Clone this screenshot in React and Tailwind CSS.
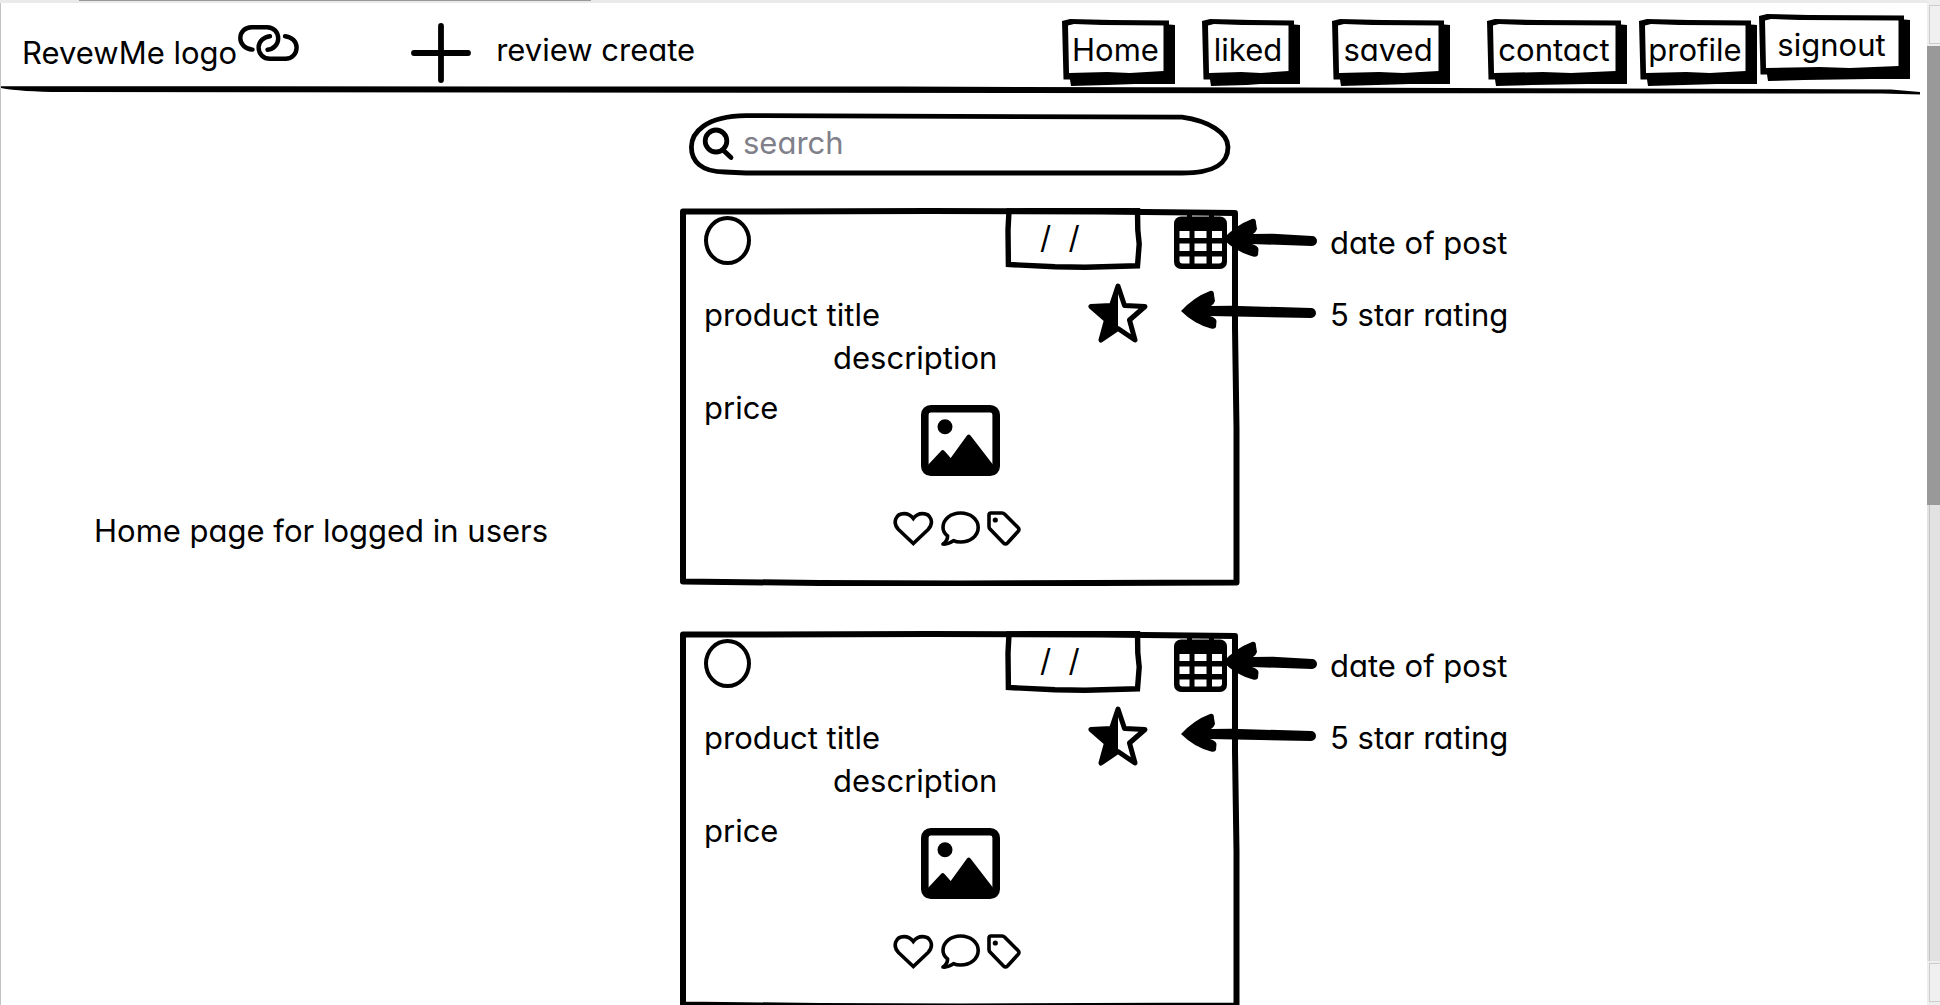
import React from "react";

const NAV = [
  { label: "Home", width: 113, box: "w-[113px] mr-[27px] mt-4" },
  { label: "liked", width: 98, box: "w-[98px] mr-8 mt-4" },
  { label: "saved", width: 118, box: "w-[118px] mr-[37px] mt-4" },
  { label: "contact", width: 140, box: "w-[140px] mr-3 mt-4" },
  { label: "profile", width: 118, box: "w-[118px] mr-0.5 mt-4" },
  { label: "signout", width: 151, box: "w-[151px] mt-[11px]" },
];

function NavButton({ label, width: w, box }) {
  return (
    <button
      type="button"
      className={"relative flex h-[67px] shrink-0 justify-center pt-[11px] pr-1.5 leading-10 " + box}
    >
      <svg
        className="absolute inset-0 h-full w-full"
        viewBox={`0 0 ${w} 67`}
        aria-hidden="true"
      >
        <path
          d={`M0 2 L8 0 L50 1 L${w - 6} 1.5 L${w - 6} 5.5 L${w} 6 L${w} 65 L${w - 40} 65 L45 66 L9 67 L8 60.5 L1.5 60.5 Z`}
          fill="#000"
        />
        <path
          d={`M6 6.5 L12 5 L40 6 L${w - 11.5} 6.5 L${w - 11.5} 52 L${w * 0.6} 54 L${w * 0.4} 53 L7 54 Z`}
          fill="#fff"
        />
      </svg>
      <span className="relative">{label}</span>
    </button>
  );
}

function LinkIcon() {
  return (
    <svg className="ml-px mt-[22px] h-9 w-[61px] shrink-0" viewBox="0 0 61 36" fill="none" stroke="#000" strokeWidth="4.4" strokeLinecap="round" aria-hidden="true">
      <path d="M14.5 24.6 C7 24 2.3 19 2.3 13 C2.3 7 7 2.2 13.5 2.2 H29 C35.5 2.2 40.2 7 40.2 13.5 C40.2 19.5 35.5 24 29.5 24.8" />
      <path d="M32 11.2 C25.5 12 20.6 16.5 20.6 22.5 C20.6 29 25.5 33.8 32 33.8 H47.5 C54 33.8 58.6 29 58.6 22.5 C58.6 16.5 54 12 47 11.2" />
    </svg>
  );
}

function PlusIcon() {
  return (
    <svg className="mt-5 h-[60px] w-[60px]" viewBox="0 0 60 60" stroke="#000" strokeWidth="5.8" strokeLinecap="round" aria-hidden="true">
      <path d="M3 30 H57 M30 3 V57" />
    </svg>
  );
}

function CalendarIcon() {
  return (
    <svg className="ml-8 h-[61px] w-[53px] shrink-0" viewBox="0 0 53 61" aria-hidden="true">
      <rect x="0" y="8.5" width="53" height="52.5" rx="7" />
      <rect x="13" y="2" width="5" height="10" rx="1" />
      <rect x="35" y="2" width="5" height="10" rx="1" />
      <g fill="#fff">
        <rect x="5.5" y="23" width="10" height="7" />
        <rect x="20.5" y="23" width="12" height="7" />
        <rect x="38" y="23" width="10" height="7" />
        <rect x="5.5" y="35.5" width="10" height="7.5" />
        <rect x="20.5" y="35.5" width="12" height="7.5" />
        <rect x="38" y="35.5" width="10" height="7.5" />
        <path d="M5.5 48.5 h10 v7 h-7 q-3 0 -3 -3 Z" />
        <rect x="20.5" y="48.5" width="12" height="7" />
        <path d="M38 48.5 h10 v4 q0 3 -3 3 h-7 Z" />
      </g>
    </svg>
  );
}

function HalfStarIcon() {
  return (
    <svg className="h-[60px] w-[60px] shrink-0" viewBox="0 0 60 60" stroke="#000" strokeWidth="5" strokeLinejoin="round" role="img" aria-label="rating">
      <path d="M30 3 L36.5 22.5 L57 23.5 L41.5 37 L47 57 L30 45.5 L13 57 L18.5 37 L3 23.5 L23.5 22.5 Z" fill="none" />
      <path d="M30 3 V45.5 L13 57 L18.5 37 L3 23.5 L23.5 22.5 Z" fill="#000" stroke="none" />
    </svg>
  );
}

function PictureIcon() {
  return (
    <svg className="mt-[17px] h-[71px] w-[79px]" viewBox="0 0 79 71" role="img" aria-label="product picture">
      <rect x="3.8" y="3.8" width="71.4" height="63.4" rx="6" fill="none" stroke="#000" strokeWidth="7.6" />
      <circle cx="24" cy="21.7" r="7.5" />
      <path d="M6 61 L20 46 Q21.7 44 23.5 46 L29.7 53 L46 30.5 Q47.7 28.5 49.5 30.5 L73 61 V67 H6 Z" />
    </svg>
  );
}

function HeartIcon() {
  return (
    <svg className="h-[35px] w-[41px]" viewBox="0 0 41 35" fill="none" stroke="#000" strokeWidth="3.6" aria-hidden="true">
      <path d="M20.3 32.5 L5.5 18.5 C-1 11.5 3 2.6 11 2.6 C15 2.6 18 4.3 20.3 7.5 C22.6 4.3 25.6 2.6 29.6 2.6 C37.6 2.6 41.6 11.5 35.1 18.5 Z" />
    </svg>
  );
}

function CommentIcon() {
  return (
    <svg className="h-[35px] w-[39px]" viewBox="0 0 39 35" fill="none" stroke="#000" strokeWidth="3.6" strokeLinejoin="round" aria-hidden="true">
      <path d="M2 33 C5 31 6.6 28.5 6.6 25 C3.5 22.5 2 19.8 2 16.5 C2 8.3 9.8 2 19.6 2 S37.2 8.3 37.2 16.5 S29.4 31 19.6 31 C17 31 14.5 30.6 12.5 29.6 C9.5 31.8 6 33.5 2 33 Z" />
    </svg>
  );
}

function TagIcon() {
  return (
    <svg className="h-[35px] w-[34px]" viewBox="0 0 34 35" fill="none" stroke="#000" strokeWidth="3.6" strokeLinejoin="round" aria-hidden="true">
      <path d="M4 2 H15 Q16.5 2 17.5 3 L31 16.5 Q33 18.5 31 20.5 L20.5 32 Q18.5 34 16.5 32 L3 18 Q2 17 2 15.5 V4 Q2 2 4 2 Z" />
      <circle cx="8.3" cy="9" r="2.6" fill="#000" stroke="none" />
    </svg>
  );
}

function Arrow({ length, box }) {
  const end = length - 5;
  return (
    <svg className={"-mt-[5px] h-10 shrink-0 " + box} viewBox={`0 0 ${length} 40`} aria-hidden="true">
      <path d={`M0 21 Q13 7 29 1 Q33 0 33 5 L34 11 Q33 14 30 16 L50 15.8 L${end} 18 A5 5 0 0 1 ${end} 28 L29 26 Q35 28 35.5 31 L35 37 Q34 39.5 30 38.5 Q13 34 0 21 Z`} />
    </svg>
  );
}

function SearchBox() {
  return (
    <form className="relative mx-auto mt-[18px] flex h-[63px] w-[542px] pt-2.5">
      <svg className="absolute inset-0 h-full w-full" viewBox="0 0 542 63" fill="none" stroke="#000" strokeWidth="4.8" aria-hidden="true">
        <path d="M2.4 34 C2.4 20 16 3 57 2.6 L493 4.2 C520 8 539 20 539 34 C539 50 527 60 493 60 L57 60 L36 59 C12 59 2.4 48 2.4 34 Z" />
        <ellipse cx="27" cy="28" rx="10.8" ry="11" />
        <path d="M34 37 L42 44.5" strokeLinecap="round" />
      </svg>
      <input
        type="text"
        aria-label="search"
        placeholder="search"
        className="relative ml-[54px] h-10 w-[440px] bg-transparent outline-none placeholder:text-[#80808a]"
      />
    </form>
  );
}

function DateField({ id }) {
  return (
    <div className="relative ml-auto h-[62px] w-[137px] shrink-0">
      <svg className="absolute inset-0 h-full w-full" viewBox="0 0 137 62" fill="none" stroke="#000" strokeWidth="5.4" aria-hidden="true">
        <path d="M4 3 L3 22 L3.4 56.5 L50 58.8 L80 59.2 L132.5 57.8 L134.2 36 L132.8 22 L132.5 2 L60 2.2 Z" />
      </svg>
      <input
        id={id}
        type="text"
        defaultValue={"/\u00a0\u00a0/"}
        className="relative mt-2.5 h-10 w-full bg-transparent pl-[35px] outline-none"
      />
    </div>
  );
}

function Card({ id }) {
  return (
    <article className="relative h-[378px] pl-6">
      <svg className="absolute inset-0 h-full w-full" viewBox="0 0 560 378" fill="none" stroke="#000" strokeWidth="6" strokeLinejoin="round" aria-hidden="true">
        <path d="M3 3.6 L250 3 L420 3.4 L555 5 L555 120 L556.5 220 L556.5 374.5 L280 375.5 L140 375 L3 373.5 L3 180 Z" />
      </svg>
      <div className="relative flex items-start pr-[13px]">
        <div className="mt-2 h-[49px] w-[47px] rounded-[50%] border-4 border-black" />
        <DateField id={id} />
        <CalendarIcon />
      </div>
      <div className="relative mt-[13px] flex items-start justify-between pr-[92px]">
        <div>
          <h2 className="mt-3">product title</h2>
          <p className="mt-[3px] ml-[129px]">description</p>
        </div>
        <HalfStarIcon />
      </div>
      <div className="relative mt-2.5 flex items-start">
        <p className="w-[217px]">price</p>
        <PictureIcon />
      </div>
      <div className="relative mt-[35px] ml-[189px] flex items-start">
        <button type="button" aria-label="like"><HeartIcon /></button>
        <button type="button" aria-label="comment" className="ml-[7px]"><CommentIcon /></button>
        <button type="button" aria-label="tag" className="ml-[7px]"><TagIcon /></button>
      </div>
    </article>
  );
}

function PostRow({ id, note }) {
  return (
    <section className="grid grid-cols-[1fr_560px_1fr] pr-2">
      <div className="pt-[303px] pl-[93px]">{note}</div>
      <Card id={id} />
      <div className="relative z-10 pt-[15px]">
        <div className="-ml-[17px] flex items-start">
          <Arrow length={94} box="w-[94px]" />
          <label htmlFor={id} className="ml-[13px]">date of post</label>
        </div>
        <div className="-ml-[59px] mt-8 flex items-start">
          <Arrow length={135} box="w-[135px]" />
          <p className="ml-[14px]">5 star rating</p>
        </div>
      </div>
    </section>
  );
}

function Header() {
  return (
    <header className="relative flex h-[92px] items-start pr-[17px] pl-[21px] whitespace-nowrap">
      <a href="#home" className="flex items-start">
        <span className="mt-[30px]">RevewMe logo</span>
        <LinkIcon />
      </a>
      <button type="button" className="ml-28 flex items-start">
        <PlusIcon />
        <span className="mt-[27px] ml-[25px]">review create</span>
      </button>
      <nav className="ml-auto flex items-start">
        {NAV.map((item) => (
          <NavButton key={item.label} {...item} />
        ))}
      </nav>
      <svg className="absolute bottom-0 left-0 h-2.5 w-full" viewBox="0 0 1926 10" preserveAspectRatio="none" aria-hidden="true">
        <path d="M0 1.2 L900 1.6 L1300 2.6 L1890 4.4 L1919 7 L1919 9.5 L1880 8.6 L800 7.8 L60 7 Q20 6.8 0 3 Z" />
      </svg>
    </header>
  );
}

function VerticalScrollbar() {
  return (
    <div className="flex w-[13px] shrink-0 flex-col bg-[#e2e2e2]" aria-hidden="true">
      <div className="h-[46px] bg-[#eeeeee] pt-[5px] pl-0.5">
        <div className="h-[39px] border border-r-0 border-[#cccccc] bg-[#f0f0f0]" />
      </div>
      <div className="h-[459px] bg-[#999999]" />
      <div className="ml-0.5 flex-1 border-l border-[#c3c3c3]" />
      <div className="h-11 bg-[#eeeeee] pt-0.5 pl-0.5">
        <div className="h-[39px] border border-r-0 border-[#cccccc] bg-[#f0f0f0]" />
      </div>
    </div>
  );
}

export default function App() {
  return (
    <div className="flex h-screen overflow-hidden bg-white font-['Inter',sans-serif] text-[31px] leading-10 text-black [font-feature-settings:'cv11']">
      <div className="min-w-0 flex-1">
        <div className="h-[3px] bg-[#eaeaea]" aria-hidden="true">
          <div className="ml-[79px] h-px w-[512px] bg-[#999999]" />
        </div>
        <div className="border-l border-[#c3c3c3]">
          <Header />
          <main>
            <div className="pr-2">
              <SearchBox />
            </div>
            <div className="mt-8 flex flex-col gap-[45px]">
              <PostRow id="date-1" note={<p className="whitespace-nowrap">Home page for logged in users</p>} />
              <PostRow id="date-2" />
            </div>
          </main>
        </div>
      </div>
      <VerticalScrollbar />
    </div>
  );
}
